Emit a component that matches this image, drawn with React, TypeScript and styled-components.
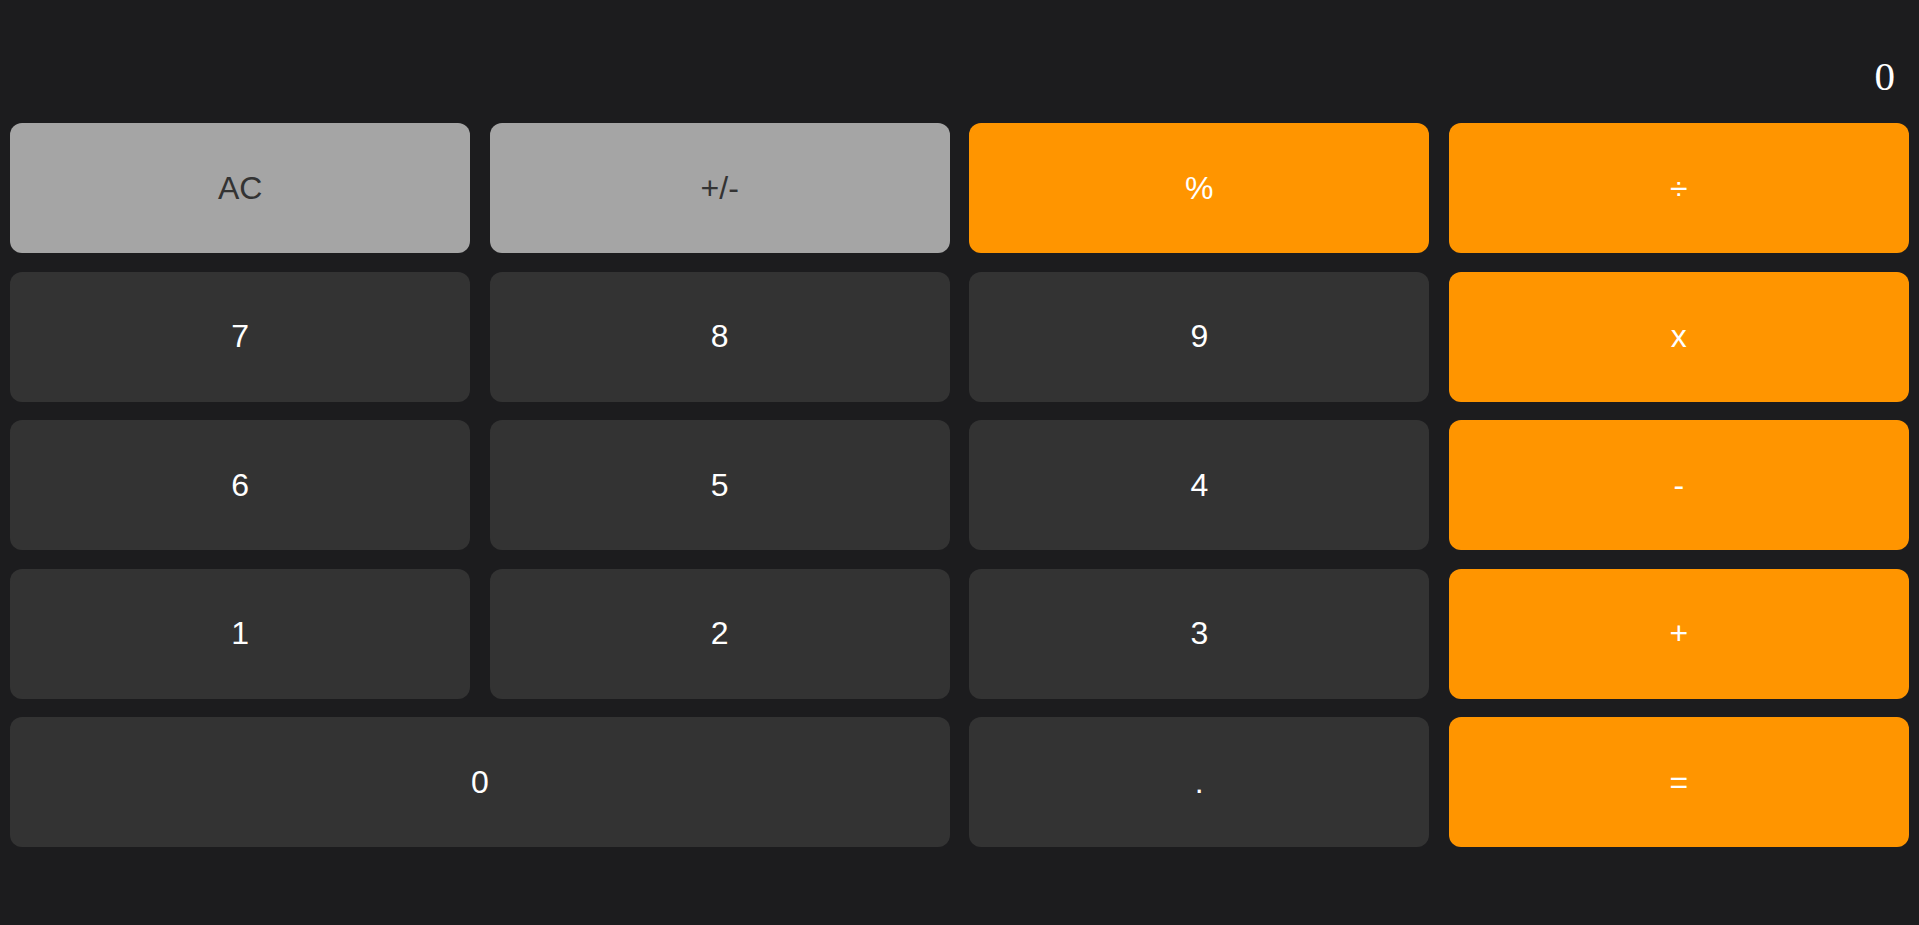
import React, { useState } from 'react'
import styled, { createGlobalStyle, css } from 'styled-components'

const GlobalStyle = createGlobalStyle`
  html, body {
    margin: 0;
    padding: 0;
    background: #1c1c1e;
  }
  body {
    min-height: 925px;
  }
`

type Kind = 'func' | 'digit' | 'op'

const Page = styled.div`
  box-sizing: border-box;
  min-height: 925px;
  padding: 0 10px;
  background: #1c1c1e;
`

const Display = styled.div`
  box-sizing: border-box;
  height: 123px;
  padding: 53px 14px 0 0;
  text-align: right;
  font-family: "Liberation Serif", "Times New Roman", serif;
  font-size: 41px;
  line-height: 46px;
  color: #ffffff;
`

const Keypad = styled.div`
  display: grid;
  grid-template-columns: repeat(4, 1fr);
  grid-auto-rows: 130px;
  column-gap: 19.2px;
  row-gap: 18.5px;
`

const Key = styled.button<{ kind: Kind; wide?: boolean }>`
  display: flex;
  align-items: center;
  justify-content: center;
  border: none;
  border-radius: 12px;
  font-family: "Liberation Sans", Arial, sans-serif;
  font-size: 32px;
  cursor: pointer;
  padding: 0;
  ${({ wide }) => wide && css`grid-column: span 2;`}
  ${({ kind }) =>
    kind === 'func'
      ? css`
          background: #a5a5a5;
          color: #333333;
        `
      : kind === 'op'
      ? css`
          background: #ff9500;
          color: #ffffff;
        `
      : css`
          background: #333333;
          color: #ffffff;
        `}
`

const keys: { label: string; kind: Kind; wide?: boolean }[] = [
  { label: 'AC', kind: 'func' },
  { label: '+/-', kind: 'func' },
  { label: '%', kind: 'op' },
  { label: '÷', kind: 'op' },
  { label: '7', kind: 'digit' },
  { label: '8', kind: 'digit' },
  { label: '9', kind: 'digit' },
  { label: 'x', kind: 'op' },
  { label: '6', kind: 'digit' },
  { label: '5', kind: 'digit' },
  { label: '4', kind: 'digit' },
  { label: '-', kind: 'op' },
  { label: '1', kind: 'digit' },
  { label: '2', kind: 'digit' },
  { label: '3', kind: 'digit' },
  { label: '+', kind: 'op' },
  { label: '0', kind: 'digit', wide: true },
  { label: '.', kind: 'digit' },
  { label: '=', kind: 'op' },
]

const App = () => {
  const [value, setValue] = useState('0')

  const press = (label: string) => {
    if (label === 'AC') return setValue('0')
    if (/^[0-9]$/.test(label)) setValue(v => (v === '0' ? label : v + label))
  }

  return (
    <>
      <GlobalStyle />
      <Page>
        <Display>{value}</Display>
        <Keypad>
          {keys.map(k => (
            <Key key={k.label} kind={k.kind} wide={k.wide} onClick={() => press(k.label)}>
              {k.label}
            </Key>
          ))}
        </Keypad>
      </Page>
    </>
  )
}

export default App
